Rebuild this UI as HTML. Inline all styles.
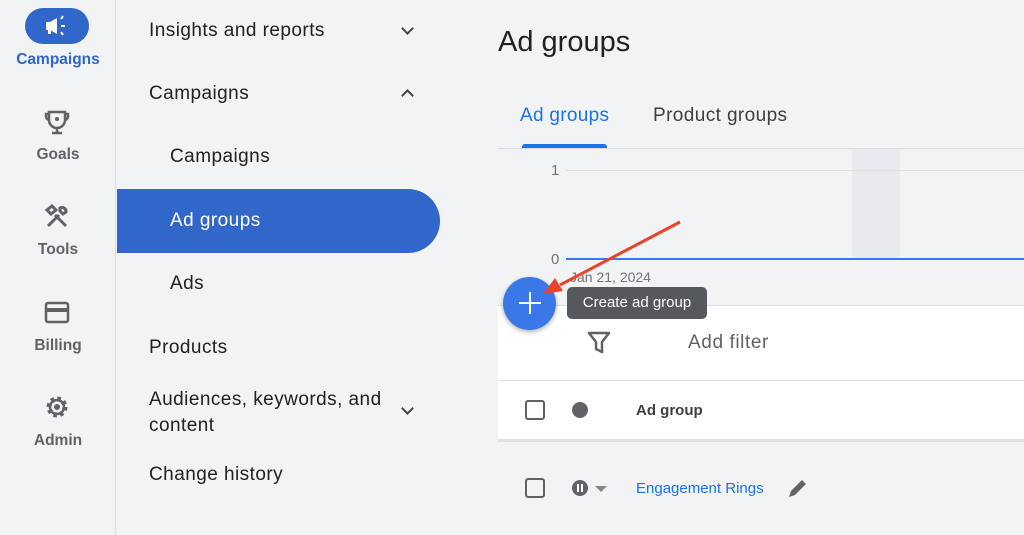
<!DOCTYPE html>
<html><head><meta charset="utf-8"><style>
*{margin:0;padding:0;box-sizing:border-box}
body{width:1024px;height:535px;overflow:hidden;background:#f1f3f4;font-family:"Liberation Sans",Arial,sans-serif;position:relative;color:#202124}
.a{position:absolute}
.side{left:0;top:0;width:116px;height:535px;border-right:1px solid #dadce0}
.si{position:absolute;left:0;width:116px;text-align:center;font-size:15.5px;color:#5f6368;font-weight:bold}
.nav{font-size:19px;color:#202124;letter-spacing:.45px}
.chev{position:absolute;width:9px;height:9px;border-right:2px solid #444;border-bottom:2px solid #444}
</style></head><body>
<div class="a side"></div>
<div class="a" style="left:25px;top:8px;width:64px;height:36px;border-radius:18px;background:#3166cb"></div>
<svg class="a" style="left:43px;top:15px" width="28" height="22" viewBox="0 0 28 22"><path d="M3 7h4l7-4v16l-7-4H3z" fill="#fff"/><rect x="5" y="14" width="3" height="5" fill="#fff"/><path d="M18 4l2-3M18 11h4M18 17l2 3" stroke="#fff" stroke-width="2"/></svg>
<div class="si" style="top:51px;color:#3166cb">Campaigns</div>
<svg class="a" style="left:44px;top:109px" width="26" height="26" viewBox="0 0 26 26"><path d="M5 3h16v8a8 8 0 0 1-16 0z M5 5H2v3a4 4 0 0 0 3 3 M21 5h3v3a4 4 0 0 1-3 3 M13 19v4 M8 24h10" fill="none" stroke="#5f6368" stroke-width="2.5"/><circle cx="13" cy="10" r="2" fill="#5f6368"/></svg>
<div class="si" style="top:146px">Goals</div>
<svg class="a" style="left:44px;top:204px" width="26" height="26" viewBox="0 0 26 26"><path d="M4 22L15 11M11 11l11 11M3 6l5-4 4 4-5 4zM16 4a4 4 0 0 1 6 4l-3 2-3-3z" fill="none" stroke="#5f6368" stroke-width="3"/></svg>
<div class="si" style="top:241px">Tools</div>
<svg class="a" style="left:44px;top:300px" width="26" height="26" viewBox="0 0 26 26"><rect x="2" y="3" width="22" height="19" rx="2" fill="none" stroke="#5f6368" stroke-width="2.5"/><rect x="2" y="8" width="22" height="4" fill="#5f6368"/></svg>
<div class="si" style="top:337px">Billing</div>
<svg class="a" style="left:44px;top:394px" width="26" height="26" viewBox="0 0 26 26"><circle cx="13" cy="13" r="8" fill="none" stroke="#5f6368" stroke-width="5" stroke-dasharray="3.2 3.1"/><circle cx="13" cy="13" r="7" fill="none" stroke="#5f6368" stroke-width="2.5"/><circle cx="13" cy="13" r="3" fill="#5f6368"/></svg>
<div class="si" style="top:432px">Admin</div>

<div class="a nav" style="left:149px;top:20px">Insights and reports</div>
<div class="chev" style="left:403px;top:24px;transform:rotate(45deg)"></div>
<div class="a nav" style="left:149px;top:83px">Campaigns</div>
<div class="chev" style="left:403px;top:91px;transform:rotate(-135deg)"></div>
<div class="a nav" style="left:170px;top:146px">Campaigns</div>
<div class="a" style="left:117px;top:189px;width:323px;height:64px;background:#3166cb;border-radius:0 32px 32px 0"></div>
<div class="a nav" style="left:170px;top:210px;color:#fff">Ad groups</div>
<div class="a nav" style="left:170px;top:273px">Ads</div>
<div class="a nav" style="left:149px;top:337px">Products</div>
<div class="a nav" style="left:149px;top:387px;line-height:26px">Audiences, keywords, and<br>content</div>
<div class="chev" style="left:403px;top:404px;transform:rotate(45deg)"></div>
<div class="a nav" style="left:149px;top:464px">Change history</div>

<div class="a" style="left:498px;top:26px;font-size:29px">Ad groups</div>
<div class="a" style="left:520px;top:105px;font-size:19px;color:#1a73e8;letter-spacing:.3px">Ad groups</div>
<div class="a" style="left:653px;top:105px;font-size:19px;color:#3c4043;letter-spacing:.4px">Product groups</div>
<div class="a" style="left:522px;top:144px;width:85px;height:4px;background:#1a73e8;border-radius:3px 3px 0 0"></div>
<div class="a" style="left:498px;top:148px;width:526px;height:1px;background:#dadce0"></div>
<div class="a" style="left:852px;top:149px;width:48px;height:109px;background:#e8eaed"></div>
<div class="a" style="left:551px;top:162px;font-size:15px;color:#70757a">1</div>
<div class="a" style="left:566px;top:170px;width:458px;height:1px;background:#e0e0e0"></div>
<div class="a" style="left:551px;top:251px;font-size:15px;color:#70757a">0</div>
<div class="a" style="left:566px;top:258px;width:458px;height:2px;background:#3b78e7"></div>
<div class="a" style="left:570px;top:269px;font-size:14px;color:#70757a">Jan 21, 2024</div>
<div class="a" style="left:498px;top:305px;width:526px;height:135px;background:#fff;border-top:1px solid #dadce0"></div>
<div class="a" style="left:498px;top:380px;width:526px;height:1px;background:#e0e0e0"></div>
<div class="a" style="left:498px;top:439px;width:526px;height:3px;background:#e0e0e0"></div>
<div class="a" style="left:567px;top:287px;width:140px;height:32px;background:#55585c;border-radius:5px;color:#fff;font-size:15px;line-height:32px;text-align:center">Create ad group</div>
<div class="a" style="left:503px;top:277px;width:53px;height:53px;border-radius:50%;background:#3b78e7;box-shadow:0 2px 5px rgba(0,0,0,.3)"></div>
<div class="a" style="left:519px;top:302px;width:22px;height:2px;background:#fff"></div>
<div class="a" style="left:529px;top:292px;width:2px;height:22px;background:#fff"></div>
<svg class="a" style="left:0;top:0" width="1024" height="535"><line x1="680" y1="222" x2="560" y2="285" stroke="#e8432c" stroke-width="3"/><path d="M543 294l12-16 8 13z" fill="#e8432c"/>
<path d="M589 333h20l-7 9v10l-6-3v-7z" fill="none" stroke="#5f6368" stroke-width="2.5" stroke-linejoin="round"/>
<rect x="526" y="401" width="18" height="18" rx="2" fill="none" stroke="#5f6368" stroke-width="2"/><circle cx="580" cy="410" r="8" fill="#5f6368"/>
<rect x="526" y="479" width="18" height="18" rx="2" fill="none" stroke="#5f6368" stroke-width="2"/><circle cx="580" cy="488" r="8" fill="#5f6368"/><rect x="577" y="484" width="2" height="8" fill="#fff"/><rect x="581" y="484" width="2" height="8" fill="#fff"/><path d="M595 486h12l-6 6z" fill="#80868b"/>
<path d="M789 497l2-6 11-11 4 4-11 11z" fill="#5f6368"/></svg>
<div class="a" style="left:688px;top:332px;font-size:19px;color:#5f6368;letter-spacing:.6px">Add filter</div>
<div class="a" style="left:636px;top:402px;font-size:15px;font-weight:bold;color:#3c4043">Ad group</div>
<div class="a" style="left:636px;top:480px;font-size:15px;color:#1a73e8">Engagement Rings</div>
</body></html>
